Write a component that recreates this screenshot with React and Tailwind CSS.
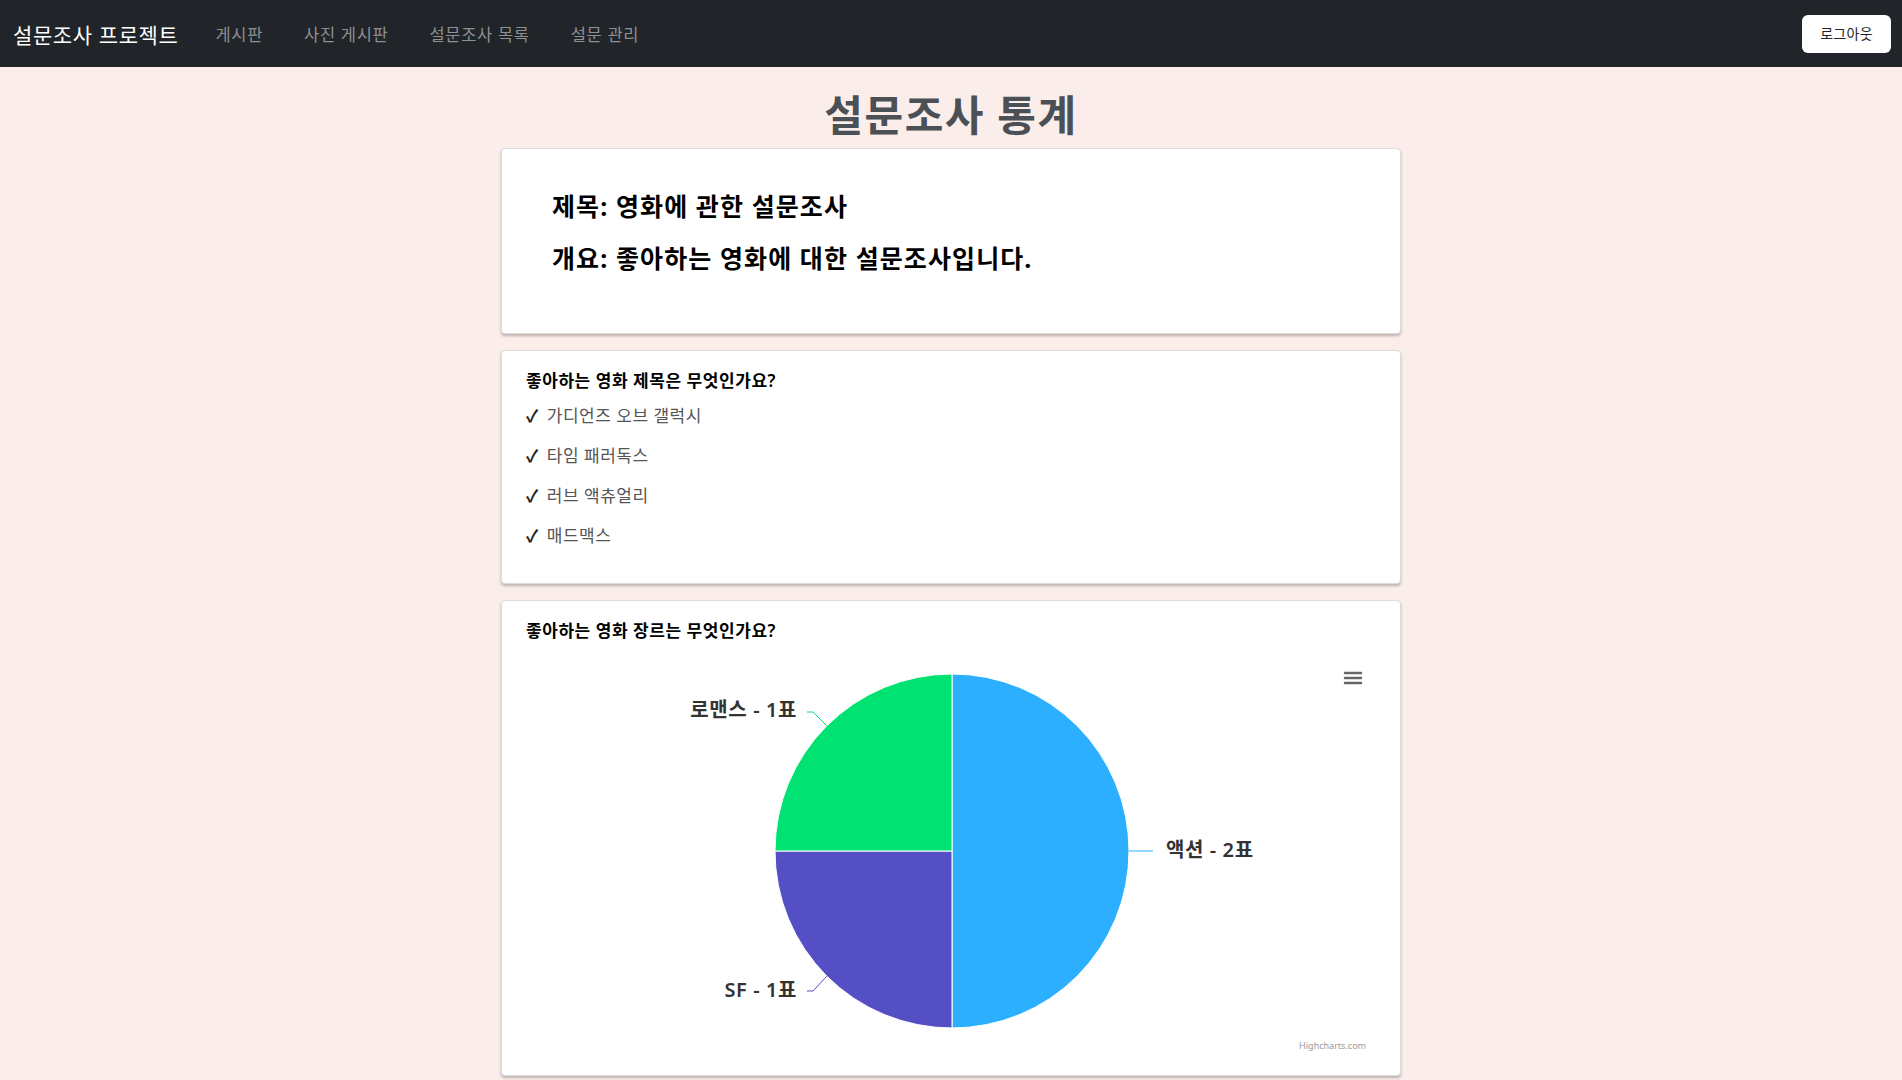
const font = { fontFamily: "'Noto Sans', 'Noto Sans CJK KR', sans-serif" };

const navLinks = ['게시판', '사진 게시판', '설문조사 목록', '설문 관리'];
const movies = ['가디언즈 오브 갤럭시', '타임 패러독스', '러브 액츄얼리', '매드맥스'];

function GenrePie() {
  // center / radius in svg coords
  const cx = 426;
  const cy = 200;
  const r = 177;
  const d = r * Math.SQRT1_2;
  return (
    <svg width="848" height="400" className="block">
      <path d={`M${cx},${cy} L${cx},${cy - r} A${r},${r} 0 0 1 ${cx},${cy + r} Z`} fill="#2caffe" stroke="#fff" strokeWidth="1" />
      <path d={`M${cx},${cy} L${cx},${cy + r} A${r},${r} 0 0 1 ${cx - r},${cy} Z`} fill="#544fc5" stroke="#fff" strokeWidth="1" />
      <path d={`M${cx},${cy} L${cx - r},${cy} A${r},${r} 0 0 1 ${cx},${cy - r} Z`} fill="#00e272" stroke="#fff" strokeWidth="1" />

      <path d={`M281,61 L287,61 L${cx - d},${cy - d}`} fill="none" stroke="#00e272" strokeWidth="1" />
      <path d={`M281,340 L287,340 L${cx - d},${cy + d}`} fill="none" stroke="#544fc5" strokeWidth="1" />
      <path d={`M${cx + r},${cy} L627,${cy}`} fill="none" stroke="#2caffe" strokeWidth="1" />

      <g fill="#333" fontSize="20" fontWeight="600" letterSpacing="0.6" style={font}>
        <text x="271" y="58" textAnchor="end" dominantBaseline="central">로맨스 - 1표</text>
        <text x="271" y="338" textAnchor="end" dominantBaseline="central">SF - 1표</text>
        <text x="640" y="198" dominantBaseline="central">액션 - 2표</text>
      </g>

      <g stroke="#666" strokeWidth="2.5" strokeLinecap="round">
        <line x1="819" y1="22" x2="835" y2="22" />
        <line x1="819" y1="27" x2="835" y2="27" />
        <line x1="819" y1="32" x2="835" y2="32" />
      </g>

      <text x="840" y="398" textAnchor="end" fontSize="9" fill="#999" style={font}>Highcharts.com</text>
    </svg>
  );
}

export default function App() {
  return (
    <div className="min-h-screen bg-[#fbede9]" style={font}>
      <nav className="flex h-[67px] items-center justify-between bg-[#212529] pl-[13px] pr-[11px]">
        <div className="flex items-center pt-[3px]">
          <span className="text-[21px] leading-[28px] tracking-[0.6px] text-white">설문조사 프로젝트</span>
          <div className="ml-[37px] flex items-center gap-[41px]">
            {navLinks.map((l) => (
              <span key={l} className="text-[16.5px] leading-[24px] tracking-[0.7px] text-[#8e9093]">{l}</span>
            ))}
          </div>
        </div>
        <button className="flex h-[38px] w-[89px] items-center justify-center rounded-[6px] bg-white text-[14px] tracking-[0.3px] text-[#212529]">로그아웃</button>
      </nav>

      <main className="mx-auto w-[900px] pb-6">
        <h1 className="mb-[9px] mt-[24px] text-center text-[42px] font-bold leading-[48px] tracking-[1.5px] text-[#4a5056]">설문조사 통계</h1>

        <div className="space-y-4">
          <div className="rounded-[4px] border border-[#dcdcdc] bg-white pb-[60px] pl-[50px] pr-6 pt-[43px] shadow-[0_2px_3px_rgba(0,0,0,0.25)]">
            <p className="mb-[23px] text-[25px] font-bold leading-[29px] tracking-[1.1px] text-black">제목: 영화에 관한 설문조사</p>
            <p className="text-[25px] font-bold leading-[29px] tracking-[1.1px] text-black">개요: 좋아하는 영화에 대한 설문조사입니다.</p>
          </div>

          <div className="rounded-[4px] border border-[#dcdcdc] bg-white px-6 pb-[19px] pt-[18px] shadow-[0_2px_3px_rgba(0,0,0,0.25)]">
            <p className="mb-[11px] text-[17px] font-semibold leading-[24px] tracking-[0.55px] text-black">좋아하는 영화 제목은 무엇인가요?</p>
            {movies.map((m) => (
              <p key={m} className="mb-4 text-[17px] leading-[24px] tracking-[0.5px] text-[#555]">
                <span className="mr-[8px] font-bold text-[#222]">✓</span>{m}
              </p>
            ))}
          </div>

          <div className="rounded-[4px] border border-[#dcdcdc] bg-white px-6 pb-6 pt-[18px] shadow-[0_2px_3px_rgba(0,0,0,0.25)]">
            <p className="mb-2 text-[17px] font-semibold leading-[24px] tracking-[0.55px] text-black">좋아하는 영화 장르는 무엇인가요?</p>
            <GenrePie />
          </div>
        </div>
      </main>
    </div>
  );
}
